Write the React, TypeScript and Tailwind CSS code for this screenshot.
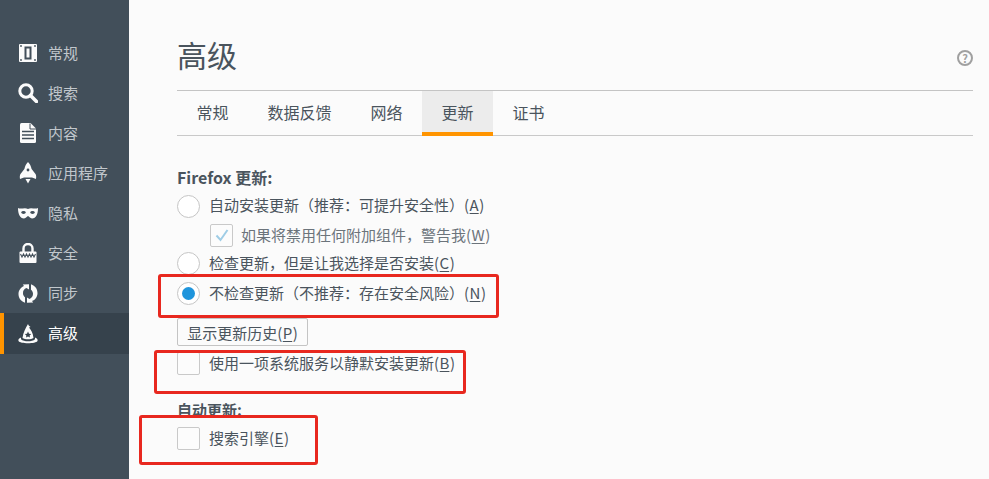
import type { ReactNode } from "react";

const FONT = "font-['Microsoft_YaHei','Noto_Sans_CJK_SC','Noto_Sans',sans-serif]";

const IconGeneral = () => (
  <svg viewBox="0 0 20 20" className="w-5 h-5">
    <rect x="1" y="1" width="18" height="18" rx="1" fill="#fbfbfb" />
    <rect x="6.5" y="3.5" width="7" height="13" fill="#424f5a" />
    <rect x="8.5" y="5.5" width="3" height="9" fill="#fbfbfb" />
    <circle cx="3" cy="3" r="0.9" fill="#424f5a" />
    <circle cx="17" cy="3" r="0.9" fill="#424f5a" />
    <circle cx="3" cy="17" r="0.9" fill="#424f5a" />
    <circle cx="17" cy="17" r="0.9" fill="#424f5a" />
  </svg>
);

const IconSearch = () => (
  <svg viewBox="0 0 20 20" className="w-5 h-5" fill="none" stroke="#fbfbfb">
    <circle cx="8" cy="8" r="6.2" strokeWidth="3" />
    <path d="M12.5 12.5 L18.5 18.5" strokeWidth="3.6" strokeLinecap="round" />
  </svg>
);

const IconContent = () => (
  <svg viewBox="0 0 20 20" className="w-5 h-5">
    <path
      d="M3.5 0 H12.5 L18 5.5 V18.5 a1.5 1.5 0 0 1 -1.5 1.5 H3.5 A1.5 1.5 0 0 1 2 18.5 V1.5 A1.5 1.5 0 0 1 3.5 0 Z"
      fill="#fbfbfb"
    />
    <path d="M12 0.5 V6 H18" fill="none" stroke="#424f5a" strokeWidth="1" />
    <path d="M4 8.5 H16 M4 12 H16 M4 15.5 H16" stroke="#424f5a" strokeWidth="1.5" />
  </svg>
);

const IconApps = () => (
  <svg viewBox="0 0 20 22" className="w-5 h-[22px]">
    <path
      d="M10 0 C11.8 1.8 13 4 13.6 7 L17.5 12 C18.3 13.2 18.3 15 18 17 L14 15.5 H6 L2 17 C1.7 15 1.7 13.2 2.5 12 L6.4 7 C7 4 8.2 1.8 10 0 Z"
      fill="#fbfbfb"
    />
    <circle cx="10" cy="8" r="1.4" fill="#424f5a" />
    <path d="M7.5 17 H12.5 L10 21.5 Z" fill="#fbfbfb" />
  </svg>
);

const IconPrivacy = () => (
  <svg viewBox="0 0 20 12" className="w-5 h-3">
    <path
      d="M0 1 C3 2.5 7 0 10 2 C13 0 17 2.5 20 1 C20 7 18 11.5 14 11.5 C12 11.5 11 9 10 9 C9 9 8 11.5 6 11.5 C2 11.5 0 7 0 1 Z"
      fill="#fbfbfb"
    />
    <ellipse cx="5.5" cy="5.5" rx="2.2" ry="1.4" fill="#424f5a" />
    <ellipse cx="14.5" cy="5.5" rx="2.2" ry="1.4" fill="#424f5a" />
  </svg>
);

const IconSecurity = () => (
  <svg viewBox="0 0 20 20" className="w-5 h-5">
    <path d="M5.5 9 V5.5 a4.5 4.5 0 0 1 9 0 V9" fill="none" stroke="#fbfbfb" strokeWidth="2.4" />
    <rect x="1.5" y="8.5" width="17" height="11.5" rx="1" fill="#fbfbfb" />
    <path
      d="M2.5 11 L4 14 L5.5 11 L7 14 L8.5 11 L10 14 L11.5 11 L13 14 L14.5 11 L16 14 L17.5 11"
      fill="none"
      stroke="#424f5a"
      strokeWidth="1.1"
    />
  </svg>
);

const IconSync = () => (
  <svg viewBox="0 0 20 20" className="w-[21px] h-[21px]">
    <path
      d="M11 0.8 L11 6 L8.5 4.6 C6.2 5.4 4.8 7.5 5 10 C5.1 11.6 5.8 12.8 7 13.8 L7 19.2 C2.8 17.8 0.3 14.2 0.5 10 C0.7 6.5 3 3.5 6 2.4 L4.8 1 Z"
      fill="#fbfbfb"
    />
    <path
      d="M9 19.2 L9 14 L11.5 15.4 C13.8 14.6 15.2 12.5 15 10 C14.9 8.4 14.2 7.2 13 6.2 L13 0.8 C17.2 2.2 19.7 5.8 19.5 10 C19.3 13.5 17 16.5 14 17.6 L15.2 19 Z"
      fill="#fbfbfb"
    />
  </svg>
);

const IconAdvanced = () => (
  <svg viewBox="0 0 20 20" className="w-5 h-5">
    <path d="M10 0 C10.5 2 12 2.5 12.5 3 L11 3.5 C13 6 15 9 15.5 14 C13 15.8 7 15.8 4.5 14 C5 9 7.5 4 10 0 Z" fill="#fbfbfb" />
    <path d="M10 7.5 L11 9.8 L13.2 10 L11.6 11.5 L12 13.6 L10 12.5 L8 13.6 L8.4 11.5 L6.8 10 L9 9.8 Z" fill="#36424c" />
    <path
      d="M3 13.5 C0.8 14.5 0 15.5 0.5 17 C2 20 18 20 19.5 17 C20 15.5 19.2 14.5 17 13.5 L17 15.2 C14 18 6 18 3 15.2 Z"
      fill="#fbfbfb"
    />
  </svg>
);

const NAV: { label: string; icon: ReactNode; active?: boolean }[] = [
  { label: "常规", icon: <IconGeneral /> },
  { label: "搜索", icon: <IconSearch /> },
  { label: "内容", icon: <IconContent /> },
  { label: "应用程序", icon: <IconApps /> },
  { label: "隐私", icon: <IconPrivacy /> },
  { label: "安全", icon: <IconSecurity /> },
  { label: "同步", icon: <IconSync /> },
  { label: "高级", icon: <IconAdvanced />, active: true },
];

const TABS = ["常规", "数据反馈", "网络", "更新", "证书"];

function Radio({ checked }: { checked?: boolean }) {
  return (
    <span className="w-[23px] h-[23px] rounded-full border border-[#c5c5c5] bg-white flex items-center justify-center shrink-0">
      {checked && <span className="w-[13px] h-[13px] rounded-full bg-[#1f95dc]" />}
    </span>
  );
}

function Checkbox({ checked }: { checked?: boolean }) {
  return (
    <span className="w-[23px] h-[23px] rounded-[2px] border border-[#c9c9c9] bg-[#fcfcfc] flex items-center justify-center shrink-0">
      {checked && (
        <svg viewBox="0 0 16 16" className="w-4 h-4" fill="none" stroke="#9fcde6" strokeWidth="2">
          <path d="M2.5 8.5 L6.5 13 L13.5 3" />
        </svg>
      )}
    </span>
  );
}

function Key({ k }: { k: string }) {
  return (
    <>
      (<span className="underline underline-offset-2 px-[0.5px]">{k}</span>)
    </>
  );
}

function RedBox({ className }: { className: string }) {
  return <div className={`absolute border-[3px] border-[#e8281f] rounded-[3px] ${className}`} />;
}

export default function App() {
  return (
    <div className={`relative flex w-[989px] h-[479px] overflow-hidden bg-[#fbfbfb] text-[#4a545d] ${FONT}`}>
      {/* SIDEBAR */}
      <aside className="w-[129px] shrink-0 bg-[#424f5a] pt-[33px]">
        {NAV.map((item) => (
          <div
            key={item.label}
            className={`flex items-center text-[15px] ${
              item.active
                ? "h-[41px] bg-[#36424c] text-white border-l-4 border-[#ff9400] pl-[14px]"
                : "h-10 text-[#c1c7cc] pl-[18px]"
            }`}
          >
            <span className="w-5 flex justify-center shrink-0">{item.icon}</span>
            <span className="ml-[10px]">{item.label}</span>
          </div>
        ))}
      </aside>

      {/* MAIN */}
      <main className="flex-1 pl-[48px] pr-4">
        <div className="h-[91px] border-b border-[#c4c4c4] flex items-center justify-between pt-[24px]">
          <h1 className="text-[30px] leading-none -mt-[6px]">高级</h1>
          <span className="w-[16px] h-[16px] mt-[2px] rounded-full border-2 border-[#a0a0a0] text-[#a0a0a0] text-[11px] leading-none font-bold flex items-center justify-center">
            ?
          </span>
        </div>

        <div className="flex h-[45px] border-b border-[#c9c9c9] text-[16px]">
          {TABS.map((tab) => (
            <div
              key={tab}
              className={`px-[19.5px] pb-[4px] flex items-center h-[45px] ${
                tab === "更新" ? "bg-[#ececec] relative" : ""
              }`}
            >
              {tab}
              {tab === "更新" && <span className="absolute left-0 right-0 bottom-0 h-1 bg-[#ff9400]" />}
            </div>
          ))}
        </div>

        <div className="text-[15px]">
          <div className="mt-[29px] h-[24px] leading-[24px] text-[16px] font-bold">Firefox 更新:</div>

          <div className="mt-[4px] h-[26px] flex items-center gap-[9px]">
            <Radio />
            <span className="-mt-[2px]">
              自动安装更新（推荐：可提升安全性）
              <Key k="A" />
            </span>
          </div>

          <div className="mt-[4px] h-[24px] flex items-center gap-[8px] pl-[33px] text-[#6c747b]">
            <Checkbox checked />
            <span>
              如果将禁用任何附加组件，警告我
              <Key k="W" />
            </span>
          </div>

          <div className="mt-[3px] h-[26px] flex items-center gap-[9px]">
            <Radio />
            <span>
              检查更新，但是让我选择是否安装
              <Key k="C" />
            </span>
          </div>

          <div className="mt-[4px] h-[26px] flex items-center gap-[9px]">
            <Radio checked />
            <span>
              不检查更新（不推荐：存在安全风险）
              <Key k="N" />
            </span>
          </div>

          <button className="mt-[12px] h-[28px] w-[131px] block border border-[#c4c4c4] rounded-[2px] bg-[#fbfbfb] text-[15px] leading-none">
            显示更新历史
            <Key k="P" />
          </button>

          <div className="mt-[6px] h-[23px] flex items-center gap-[9px]">
            <Checkbox />
            <span>
              使用一项系统服务以静默安装更新
              <Key k="B" />
            </span>
          </div>

          <div className="mt-[23px] h-[24px] leading-[24px] text-[15px] font-bold">自动更新:</div>

          <div className="mt-[5px] h-[23px] flex items-center gap-[9px]">
            <Checkbox />
            <span>
              搜索引擎
              <Key k="E" />
            </span>
          </div>
        </div>
      </main>

      {/* annotation boxes drawn on top of the screenshot */}
      <RedBox className="left-[158px] top-[274px] w-[341px] h-[44px]" />
      <RedBox className="left-[154px] top-[350px] w-[312px] h-[44px]" />
      <RedBox className="left-[139px] top-[415px] w-[179px] h-[50px]" />
    </div>
  );
}
